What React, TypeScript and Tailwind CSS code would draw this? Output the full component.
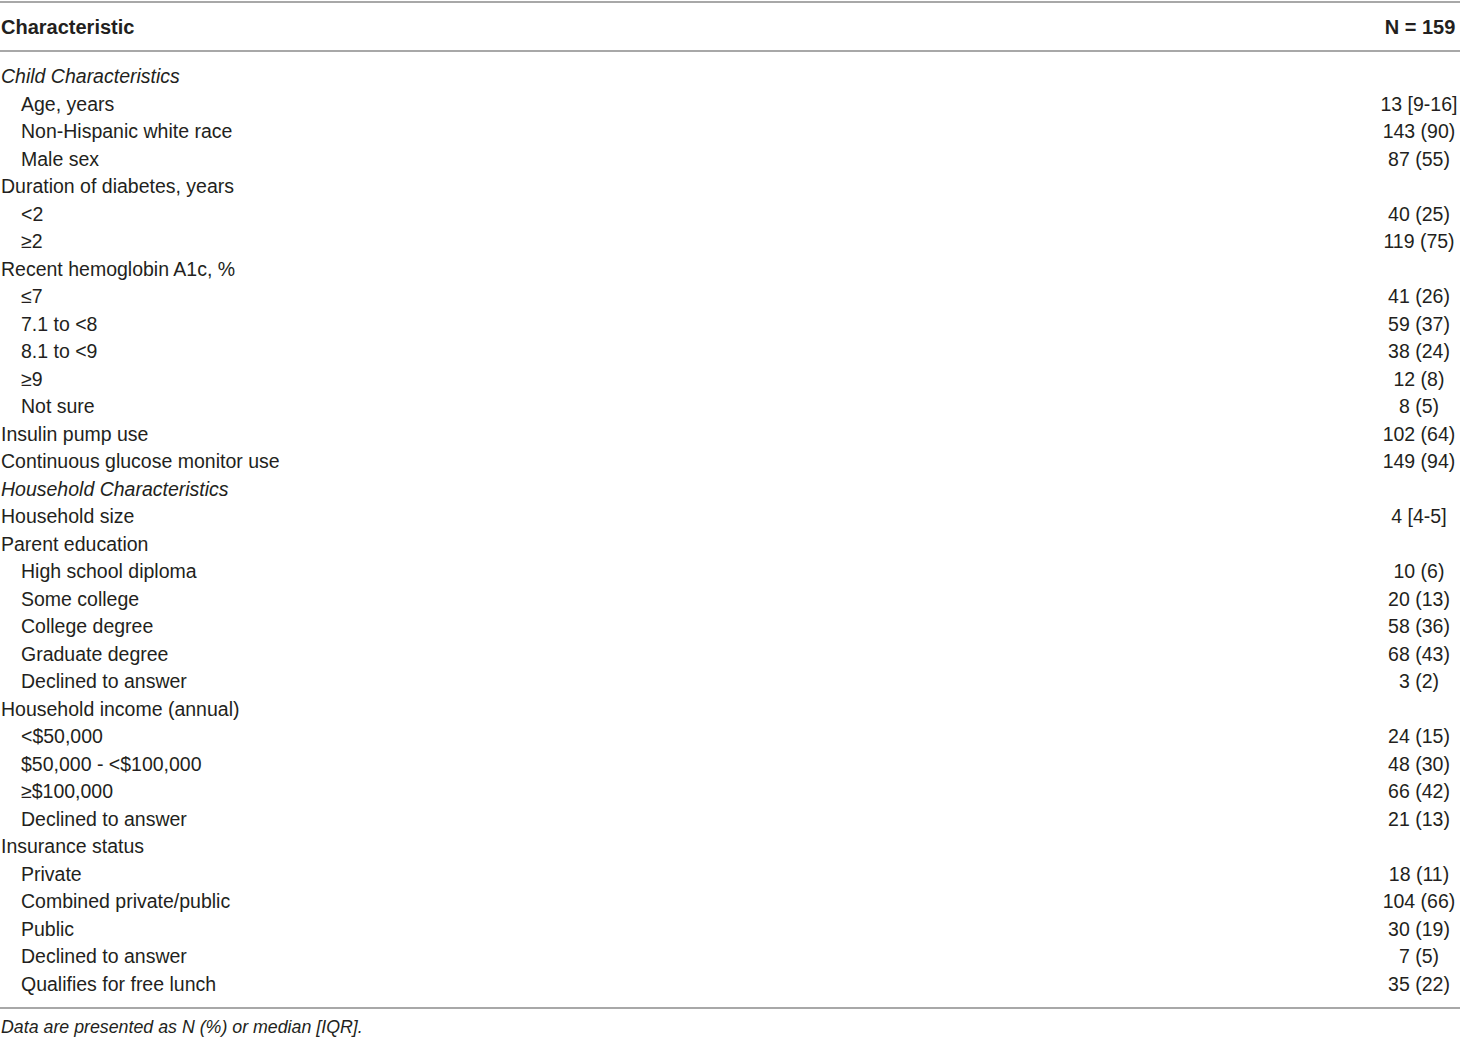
const ROWS: { label: string; value?: string; indent?: boolean; italic?: boolean }[] = [
  { label: "Child Characteristics", italic: true },
  { label: "Age, years", value: "13 [9-16]", indent: true },
  { label: "Non-Hispanic white race", value: "143 (90)", indent: true },
  { label: "Male sex", value: "87 (55)", indent: true },
  { label: "Duration of diabetes, years" },
  { label: "<2", value: "40 (25)", indent: true },
  { label: "≥2", value: "119 (75)", indent: true },
  { label: "Recent hemoglobin A1c, %" },
  { label: "≤7", value: "41 (26)", indent: true },
  { label: "7.1 to <8", value: "59 (37)", indent: true },
  { label: "8.1 to <9", value: "38 (24)", indent: true },
  { label: "≥9", value: "12 (8)", indent: true },
  { label: "Not sure", value: "8 (5)", indent: true },
  { label: "Insulin pump use", value: "102 (64)" },
  { label: "Continuous glucose monitor use", value: "149 (94)" },
  { label: "Household Characteristics", italic: true },
  { label: "Household size", value: "4 [4-5]" },
  { label: "Parent education" },
  { label: "High school diploma", value: "10 (6)", indent: true },
  { label: "Some college", value: "20 (13)", indent: true },
  { label: "College degree", value: "58 (36)", indent: true },
  { label: "Graduate degree", value: "68 (43)", indent: true },
  { label: "Declined to answer", value: "3 (2)", indent: true },
  { label: "Household income (annual)" },
  { label: "<$50,000", value: "24 (15)", indent: true },
  { label: "$50,000 - <$100,000", value: "48 (30)", indent: true },
  { label: "≥$100,000", value: "66 (42)", indent: true },
  { label: "Declined to answer", value: "21 (13)", indent: true },
  { label: "Insurance status" },
  { label: "Private", value: "18 (11)", indent: true },
  { label: "Combined private/public", value: "104 (66)", indent: true },
  { label: "Public", value: "30 (19)", indent: true },
  { label: "Declined to answer", value: "7 (5)", indent: true },
  { label: "Qualifies for free lunch", value: "35 (22)", indent: true },
];

export default function App() {
  return (
    <div className="w-[1460px] min-h-[1038px] bg-white font-['Liberation_Sans',Arial,sans-serif] text-[#231f20]">
      <div className="pt-px">
        <div className="h-[2px] bg-[#a8a8a8]" />
        <div className="flex h-[47px] items-center text-[20px] font-bold">
          <div className="flex-1 pl-[1px]">Characteristic</div>
          <div className="w-[82px] pl-[2px] text-center">N = 159</div>
        </div>
        <div className="h-[2px] bg-[#a8a8a8]" />
      </div>

      <div className="pt-[11px] pb-[9px]">
        {ROWS.map((r, i) => (
          <div key={i} className="flex h-[27.5px] items-center text-[19.5px] leading-none">
            <div
              className={
                "flex-1 " + (r.indent ? "pl-[21px]" : "pl-[1px]") + (r.italic ? " italic" : "")
              }
            >
              {r.label}
            </div>
            <div className="w-[82px] text-center">{r.value}</div>
          </div>
        ))}
      </div>

      <div className="h-[2px] bg-[#a8a8a8]" />
      <div className="pt-[8px] pl-[1px] text-[17.8px] italic leading-[20px]">
        Data are presented as N (%) or median [IQR].
      </div>
    </div>
  );
}
